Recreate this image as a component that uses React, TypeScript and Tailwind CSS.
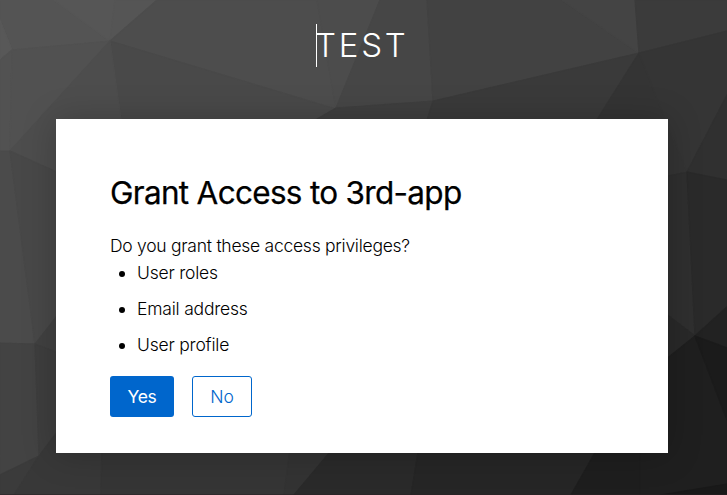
const facets: { points: string; fill: string }[] = [
  { points: "0,0 54,0 110,41 12,50 0,20", fill: "#545454" },
  { points: "0,20 12,50 0,60", fill: "#585858" },
  { points: "54,0 115,0 110,41", fill: "#565656" },
  { points: "115,0 157,0 110,41", fill: "#555555" },
  { points: "110,41 157,0 317,0 336,109", fill: "#4d4d4d" },
  { points: "317,0 380,0 336,109", fill: "#4c4c4c" },
  { points: "380,0 427,0 433,101 336,108", fill: "#464646" },
  { points: "427,0 562,0 639,53 433,101", fill: "#424242" },
  { points: "562,0 635,0 639,53", fill: "#444444" },
  { points: "635,0 727,0 727,31 639,53", fill: "#3b3b3b" },
  { points: "110,41 336,109 310,125 310,180 121,180 121,119", fill: "#494949" },
  { points: "336,108 433,101 424,130 424,180 310,180 310,123", fill: "#3f3f3f" },
  { points: "433,101 639,53 588,134 588,180 424,180 424,130", fill: "#3a3a3a" },
  { points: "639,53 687,172 668,176 588,180 588,134", fill: "#343434" },
  { points: "639,53 727,31 727,95 687,172 665,119", fill: "#353535" },
  { points: "727,95 727,180 687,172", fill: "#303030" },
  { points: "0,60 12,50 10,151 0,151", fill: "#525252" },
  { points: "12,50 110,41 10,151", fill: "#515151" },
  { points: "110,41 121,119 121,200 10,151", fill: "#4d4d4d" },
  { points: "0,151 10,151 35,344 0,343", fill: "#4b4b4b" },
  { points: "10,151 130,205 130,223 35,344", fill: "#484848" },
  { points: "35,344 130,223 130,380", fill: "#414141" },
  { points: "0,343 35,344 39,456 0,475", fill: "#434343" },
  { points: "35,344 130,380 130,335 39,456", fill: "#3e3e3e" },
  { points: "0,475 39,456 14,495 0,495", fill: "#3b3b3b" },
  { points: "39,456 130,335 102,453 101,495 14,495", fill: "#383838" },
  { points: "102,440 299,440 284,495 101,495", fill: "#353535" },
  { points: "291,440 340,440 294,495 284,495", fill: "#333333" },
  { points: "340,440 420,440 411,495 294,495", fill: "#2a2a2a" },
  { points: "420,440 602,440 571,495 411,495", fill: "#262626" },
  { points: "602,440 668,440 668,495 571,495", fill: "#1e1e1e" },
  { points: "640,182 687,172 695,336 640,294", fill: "#2f2f2f" },
  { points: "687,172 727,180 727,307 695,336", fill: "#2a2a2a" },
  { points: "640,294 695,336 640,380", fill: "#292929" },
  { points: "727,307 727,348 695,336", fill: "#222222" },
  { points: "640,380 695,336 727,420 727,495 640,495", fill: "#1f1f1f" },
  { points: "695,336 727,348 727,420", fill: "#1b1b1b" },
  { points: "660,495 727,484 727,495", fill: "#191919" },
];

const scopes = ["User roles", "Email address", "User profile"];

function Backdrop() {
  return (
    <svg
      viewBox="0 0 727 495"
      className="absolute inset-0 h-full w-full"
      aria-hidden="true"
    >
      {facets.map((facet) => (
        <polygon
          key={facet.points}
          points={facet.points}
          fill={facet.fill}
          stroke={facet.fill}
          strokeWidth="1.2"
          strokeLinejoin="round"
        />
      ))}
      <rect y="494" width="727" height="1" fill="#2a2023" fillOpacity="0.5" />
    </svg>
  );
}

export default function App() {
  return (
    <div className="relative h-[495px] w-[727px] overflow-hidden bg-[#404040] font-['Inter','Open_Sans',sans-serif] text-black">
      <Backdrop />

      <div className="relative flex flex-col">
        {/* Realm name */}
        <header className="flex h-[119px] pt-6 pl-[316px]">
          <div className="h-[43px] border-l border-white -indent-[2px] text-[33px] leading-[43px] font-light tracking-[2.8px] text-white">
            TEST
          </div>
        </header>

        <main className="ml-14 h-[334px] w-[612px] bg-white px-[54px] pt-[52px] shadow-[0_1px_32px_rgba(0,0,0,0.22)]">
          <h1 className="h-11 text-[31.5px] leading-11 tracking-[-0.7px] whitespace-nowrap [-webkit-text-stroke:0.25px_#000]">
            Grant Access to 3rd-app
          </h1>

          <p className="mt-[17px] text-[17.5px] leading-[27px] font-light tracking-[-0.26px]">
            Do you grant these access privileges?
          </p>
          <ul className="-ml-px list-disc space-y-[9px] pl-7 text-[17.5px] leading-[27px] font-light tracking-[-0.2px]">
            {scopes.map((scope) => (
              <li key={scope}>{scope}</li>
            ))}
          </ul>

          <div className="mt-[18px] flex gap-[18px] text-[17.5px]">
            <button className="h-[41px] w-16 rounded-[3px] bg-[#0066cc] pt-0.5 tracking-[-0.4px] text-white">
              Yes
            </button>
            <button className="h-[41px] w-[60px] rounded-[3px] border border-[#0066cc] pt-0.5 font-light text-[#0066cc]">
              No
            </button>
          </div>
        </main>
      </div>
    </div>
  );
}
